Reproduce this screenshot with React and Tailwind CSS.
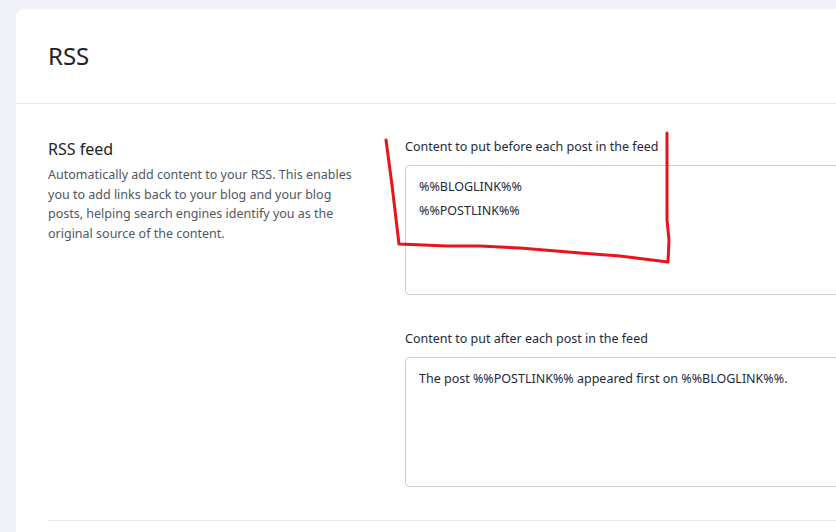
export default function App() {
  return (
    <div
      className="relative h-[532px] w-[836px] overflow-hidden bg-[#f0f2f7] pl-4 pt-[9px]"
      style={{ fontFamily: '"Noto Sans", "Segoe UI", sans-serif' }}
    >
      <div className="h-[600px] w-[900px] rounded-tl-lg bg-white">
        <div className="border-b border-[#e3e6ec] px-8 py-[33px]">
          <h1 className="text-[24px] leading-[28px] text-[#1d2327]">RSS</h1>
        </div>

        <div className="mx-8 flex border-b border-[#e3e6ec] pb-[33px] pt-[33px]">
          <div className="w-[357px] shrink-0">
            <h2 className="text-[16px] leading-6 text-[#1d2327]">RSS feed</h2>
            <p className="mt-1 w-[306px] text-[12.5px] leading-[19.5px] text-[#50575e]">
              Automatically add content to your RSS. This enables you to add links back to your blog and your blog
              posts, helping search engines identify you as the original source of the content.
            </p>
          </div>

          <div className="flex w-[500px] flex-col">
            <label className="text-[12.5px] leading-5 text-[#1e2a3b]">Content to put before each post in the feed</label>
            <textarea
              readOnly
              className="mt-2 h-[130px] resize-none rounded-[4px] border border-[#c7cfdb] px-[13px] py-[9px] text-[12.5px] leading-6 text-[#1e2a3b] outline-none"
              defaultValue={"%%BLOGLINK%%\n%%POSTLINK%%"}
            />

            <label className="mt-[34px] text-[12.5px] leading-5 text-[#1e2a3b]">Content to put after each post in the feed</label>
            <textarea
              readOnly
              className="mt-2 h-[130px] resize-none rounded-[4px] border border-[#c7cfdb] px-[13px] py-[9px] text-[12.5px] leading-6 text-[#1e2a3b] outline-none"
              defaultValue="The post %%POSTLINK%% appeared first on %%BLOGLINK%%."
            />
          </div>
        </div>
      </div>

      <svg className="pointer-events-none absolute left-0 top-0" width="836" height="532">
        <path
          d="M386 140 L392 185 L399 244 L447 246 L480 246 L520 248 L580 253 L620 256 L668 262 L669 240 L667 220 L667 180 L667 133"
          fill="none"
          stroke="#e4161c"
          strokeWidth="3"
          strokeLinecap="round"
          strokeLinejoin="round"
        />
      </svg>
    </div>
  )
}
